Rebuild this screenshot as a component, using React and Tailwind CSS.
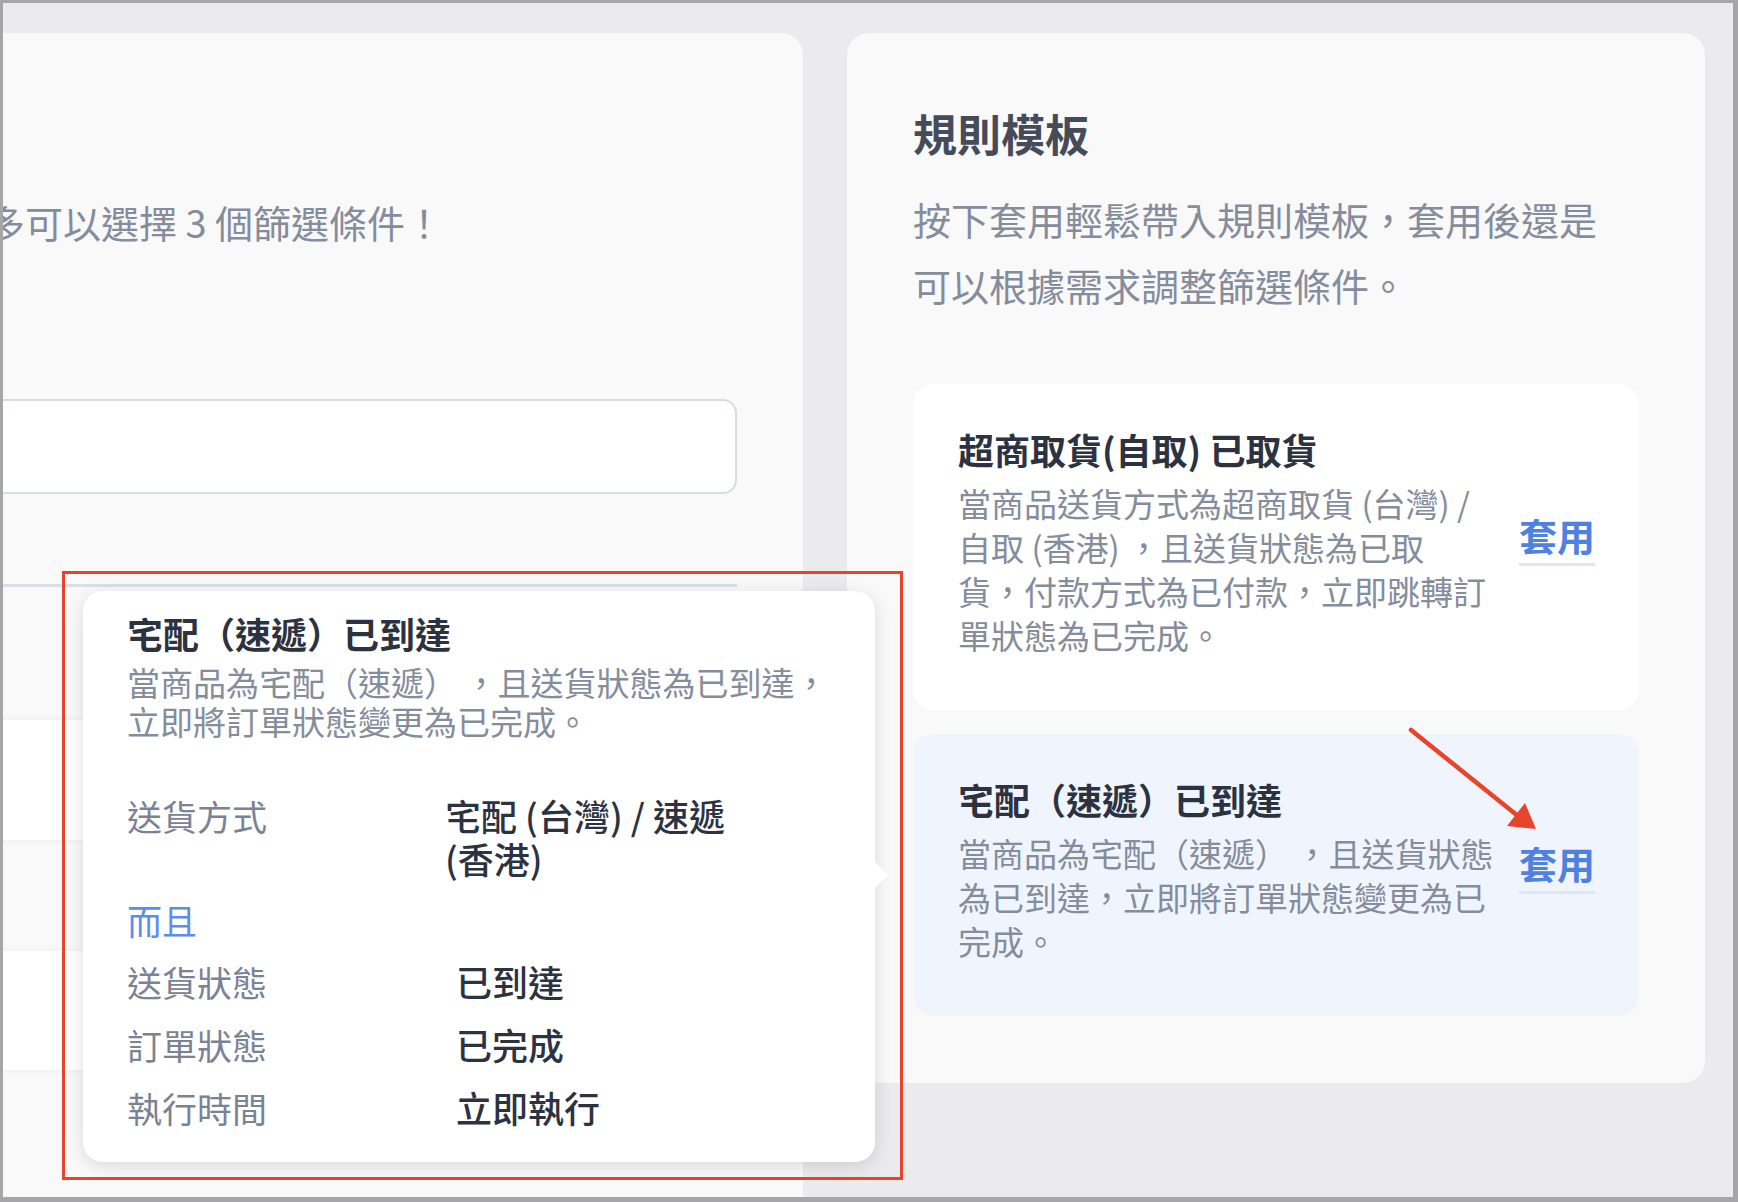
import React from "react";

const FONT = { fontFamily: '"Noto Sans CJK TC", "Noto Sans", sans-serif' };

function TemplateCard({ title, lines, active }) {
  return (
    <div
      className={`flex items-center justify-between rounded-[20px] pl-[45px] pr-[44px] pt-[37px] pb-[53px] ${
        active ? "bg-[#f0f5fd]" : "bg-white"
      }`}
    >
      <div className="w-[556px]">
        <div className="text-[36px] leading-[56px] font-bold text-[#2d3240] whitespace-nowrap">{title}</div>
        <div className="mt-[4px] text-[33px] leading-[44px] text-[#858c9c] whitespace-nowrap">
          {lines.map((l, i) => (
            <div key={i}>{l}</div>
          ))}
        </div>
      </div>
      <div className="text-[38px] leading-[44px] font-semibold text-[#5081e1] pb-[6px] border-b-[3px] border-[#dce6f9] whitespace-nowrap">
        套用
      </div>
    </div>
  );
}

function Row({ label, value, valueOffset, valueWidth }) {
  return (
    <div className="flex">
      <div className="text-[35px] leading-[43px] text-[#7a8294] shrink-0" style={{ width: valueOffset }}>
        {label}
      </div>
      <div className="text-[36px] leading-[43px] font-medium text-[#2d3240]" style={{ width: valueWidth }}>
        {value}
      </div>
    </div>
  );
}

export default function App() {
  return (
    <div
      style={FONT}
      className="relative w-[1738px] h-[1202px] overflow-hidden bg-[#ebebed] border-t-[3px] border-l-[3px] border-r-[5px] border-b-[5px] border-[#a6a6a9]"
    >
      <div className="flex items-start gap-[44px] pt-[30px]">
        {/* Left card */}
        <div className="ml-[-120px] w-[920px] h-[1200px] shrink-0 bg-[#f9f9fa] rounded-tr-[22px] pl-[66px] pr-[66px] pt-[156px]">
          <div className="text-[38px] leading-[66px] text-[#858c9c] whitespace-nowrap">最多可以選擇 3 個篩選條件！</div>
          <div className="mt-[144px] h-[95px] rounded-[14px] border-2 border-[#d6dde8] bg-white" />
          <div className="mt-[90px] h-[3px] bg-[#d9dfe8]" />
          <div className="mt-[133px] h-[120px] bg-white shadow-[0_0_8px_rgba(0,0,0,0.06)]" />
          <div className="mt-[111px] h-[119px] bg-white shadow-[0_0_8px_rgba(0,0,0,0.06)]" />
        </div>

        {/* Right card */}
        <div className="w-[858px] shrink-0 bg-[#f9f9fa] rounded-[22px] px-[66px] pt-[70px] pb-[67px]">
          <div className="text-[44px] leading-[60px] font-bold text-[#454b59]">規則模板</div>
          <div className="mt-[23px] max-w-[700px] text-[38px] leading-[66px] text-[#858c9c]">
            按下套用輕鬆帶入規則模板，套用後還是可以根據需求調整篩選條件。
          </div>
          <div className="mt-[66px] flex flex-col gap-[24px]">
            <TemplateCard
              title="超商取貨(自取) 已取貨"
              lines={[
                "當商品送貨方式為超商取貨 (台灣) /",
                "自取 (香港) ，且送貨狀態為已取",
                "貨，付款方式為已付款，立即跳轉訂",
                "單狀態為已完成。",
              ]}
            />
            <TemplateCard
              active
              title="宅配（速遞）已到達"
              lines={["當商品為宅配（速遞） ，且送貨狀態", "為已到達，立即將訂單狀態變更為已", "完成。"]}
            />
          </div>
        </div>
      </div>

      {/* Red highlight box */}
      <div className="absolute left-[59px] top-[568px] w-[841px] h-[609px] border-[3px] border-[#e8432b]" />

      {/* Popover */}
      <div className="absolute left-[80px] top-[588px] w-[792px] h-[571px] bg-white rounded-[20px] shadow-[0_4px_18px_rgba(0,0,0,0.13)] pl-[44px] pr-[44px] pt-[18px]">
        <div className="text-[36px] leading-[48px] font-bold text-[#2d3240]">宅配（速遞）已到達</div>
        <div className="mt-[6px] text-[33px] leading-[39px] text-[#858c9c] whitespace-nowrap">
          <div>當商品為宅配（速遞） ，且送貨狀態為已到達，</div>
          <div>立即將訂單狀態變更為已完成。</div>
        </div>
        <div className="mt-[53px]">
          <Row label="送貨方式" value="宅配 (台灣) / 速遞 (香港)" valueOffset={318} valueWidth={320} />
        </div>
        <div className="mt-[18px] text-[35px] leading-[43px] text-[#5b8def]">而且</div>
        <div className="mt-[19px] flex flex-col gap-[20px]">
          <Row label="送貨狀態" value="已到達" valueOffset={329} valueWidth={320} />
          <Row label="訂單狀態" value="已完成" valueOffset={329} valueWidth={320} />
          <Row label="執行時間" value="立即執行" valueOffset={329} valueWidth={320} />
        </div>
        <div className="absolute right-[-13px] top-[271px] w-0 h-0 border-y-[13px] border-y-transparent border-l-[13px] border-l-white" />
      </div>

      {/* Red arrow */}
      <svg
        className="absolute left-[-3px] top-[-3px] pointer-events-none"
        width="1738"
        height="1202"
        viewBox="0 0 1738 1202"
      >
        <line x1="1411" y1="730" x2="1518" y2="816" stroke="#e8432b" strokeWidth="4.5" strokeLinecap="round" />
        <polygon points="1536,829 1507,826 1525,803" fill="#e8432b" />
      </svg>
    </div>
  );
}
